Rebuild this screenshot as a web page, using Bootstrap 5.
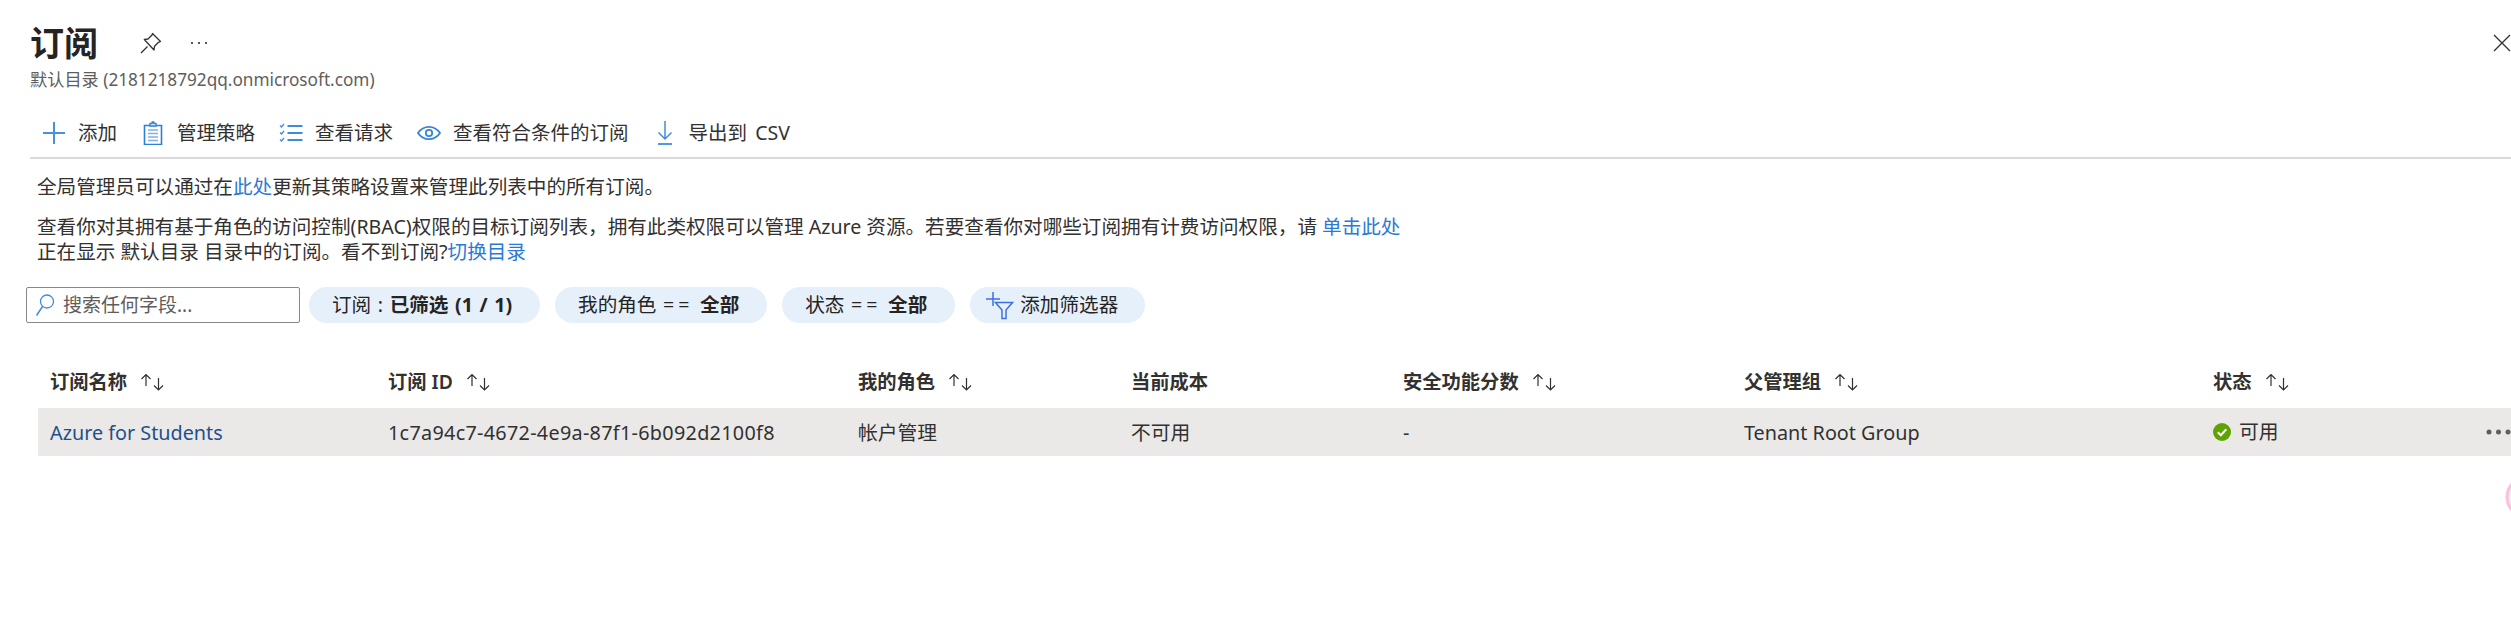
<!DOCTYPE html>
<html lang="zh-CN">
<head>
  <meta charset="UTF-8" />
  <meta name="viewport" content="width=device-width, initial-scale=1.0" />
  <title>订阅</title>
  <link href="https://cdn.jsdelivr.net/npm/bootstrap@5.3.2/dist/css/bootstrap.min.css" rel="stylesheet">
  <style>
    body {
      font-family: "Noto Sans", "Noto Sans CJK SC", sans-serif;
      font-size: 19.5px;
      color: #323130;
      background: #fff;
      overflow: hidden;
      height: 621px;
      position: relative;
    }
    a { color: #2b79d6; text-decoration: none; }
    .crumb-strip { height: 3px; overflow: hidden; padding-left: 50px; display: flex; align-items: flex-end; font-size: 19px; line-height: 24px; color: #2b79d6; }
    .title-row { height: 40px; margin-top: 20px; padding-left: 30px; }
    .page-title { font-size: 34px; font-weight: 700; line-height: 40px; margin: 0; color: #252423; width: 110px; }
    .title-more { margin-left: 28px; }
    .title-sub { padding-left: 30px; margin-top: 5px; font-size: 17.2px; line-height: 24px; color: #605e5c; }
    .tool-row { height: 51px; margin-top: 16px; margin-left: 30px; padding-left: 12px; gap: 24px; border-bottom: 2px solid #d9d9d9; }
    .tool-btn { font-size: 19.5px; word-spacing: 3px; color: #323130; gap: 12px; line-height: 24px; }
    .msg-area { padding-left: 37px; margin-top: 15px; line-height: 25px; font-size: 19.6px; }
    .msg-area p { margin: 0 0 15px; }
    .filter-row { margin-top: 23px; padding-left: 26px; height: 36px; }
    .search-box { width: 274px; height: 36px; border: 1px solid #8a8886; border-radius: 2px; padding-left: 8px; gap: 8px; }
    .search-input { border: 0; outline: 0; padding: 0; font-size: 19px; width: 220px; background: transparent; }
    .search-input::placeholder { color: #605e5c; opacity: 1; }
    .filter-pill { height: 36px; border-radius: 18px; background: #e5f0fb; font-size: 19.6px; word-spacing: 1.5px; padding: 0 28px 0 23px; color: #252423; line-height: 36px; white-space: nowrap; margin-left: 15px; }
    .search-box + .filter-pill { margin-left: 9px; }
    .filter-pill b { font-weight: 700; }
    .eq-op { letter-spacing: 4px; }
    .pill-add { padding: 0 27px 0 16px; gap: 6px; }
    .sub-table { table-layout: fixed; width: 2473px; margin: 33px 0 0 38px; border-collapse: collapse; }
    .sub-table th { height: 52px; padding: 0 12px; font-weight: 600; font-size: 19.3px; vertical-align: middle; white-space: nowrap; color: #323130; }
    .sub-table td { height: 48px; padding: 1px 12px 0; background: #ebe9e8; vertical-align: middle; white-space: nowrap; font-size: 19.8px; color: #323130; }
    .sub-table col:nth-child(1) { width: 338px; }
    .sub-table col:nth-child(2) { width: 470px; }
    .sub-table col:nth-child(3) { width: 273px; }
    .sub-table col:nth-child(4) { width: 272px; }
    .sub-table col:nth-child(5) { width: 341px; }
    .sub-table col:nth-child(6) { width: 469px; }
    .sub-table col:nth-child(7) { width: 250px; }
    .sub-table col:nth-child(8) { width: 60px; }
    .sub-link { color: #1f4f8b; }
    .sub-id { letter-spacing: .3px; }
    .sort-mark { margin-left: 13px; vertical-align: -2px; }
    .sub-table td.more-cell { padding: 0; text-align: right; }
    .pink-blob { position: absolute; left: 2505px; top: 475px; width: 44px; height: 44px; border-radius: 50%; background: radial-gradient(closest-side, #fff 72%, #fbb9d8 90%, #fcd0e4 97%, rgba(255,255,255,0) 100%); }
  </style>
</head>
<body>
  <svg width="0" height="0" class="d-block">
    <symbol id="sortArrows" viewBox="0 0 25 18">
      <path d="M6 13V1.500M1.500 6L6 1.500 10.500 6M18.500 5V17M14 12.500l4.500 4.500 4.500-4.500" fill="none" stroke="#323130" stroke-width="1.200"/>
    </symbol>
  </svg>

  <div class="crumb-strip"><span>主页 &gt;</span></div>

  <!-- Title -->
  <div class="title-row d-flex align-items-center">
    <h1 class="page-title">订阅</h1>
    <svg width="22" height="22" viewBox="0 0 22 22">
      <path d="M1 21l6.500-6.500M12.500 1.500l8 8-2 .8-4 4 -.5 3.700L4.300 7.500l3.700-.5 4-4z" fill="none" stroke="#323130" stroke-width="1.300" stroke-linejoin="round"/>
    </svg>
    <svg width="18" height="4" viewBox="0 0 18 4" class="title-more">
      <circle cx="2" cy="2" r="1.100" fill="#323130"/><circle cx="9" cy="2" r="1.100" fill="#323130"/><circle cx="16" cy="2" r="1.100" fill="#323130"/>
    </svg>
    <svg width="18" height="18" viewBox="0 0 18 18" class="ms-auto me-n1 flex-shrink-0">
      <path d="M1 1l16 16M17 1L1 17" stroke="#323130" stroke-width="1.300"/>
    </svg>
  </div>
  <div class="title-sub">默认目录 (2181218792qq.onmicrosoft.com)</div>

  <!-- Toolbar -->
  <div class="tool-row d-flex align-items-center">
    <button class="btn tool-btn border-0 p-0 d-inline-flex align-items-center">
      <svg width="24" height="24" viewBox="0 0 24 24"><path d="M12 1v22M1 12h22" stroke="#4a90dc" stroke-width="2"/></svg>添加
    </button>
    <button class="btn tool-btn border-0 p-0 d-inline-flex align-items-center">
      <svg width="24" height="24" viewBox="0 0 24 24">
        <path d="M3.500 4.500h17v19h-17z" fill="none" stroke="#2f7fd8" stroke-width="1.600"/>
        <path d="M9 5V2.500h2.200V1h1.600v1.500H15V5z" fill="#fff" stroke="#2f7fd8" stroke-width="1.300"/>
        <path d="M7 9h10M7 12.500h10M7 16h10M7 19.500h10" stroke="#7fb0e6" stroke-width="1.300"/>
      </svg>管理策略
    </button>
    <button class="btn tool-btn border-0 p-0 d-inline-flex align-items-center">
      <svg width="24" height="24" viewBox="0 0 24 24">
        <path d="M8.500 5h15M8.500 12h15M8.500 19h15" stroke="#3d8ade" stroke-width="2"/>
        <path d="M1 4.500l1.500 1.500L5 3M1 11.500L2.500 13 5 10M1 18.500L2.500 20 5 17" fill="none" stroke="#3d8ade" stroke-width="1.300"/>
      </svg>查看请求
    </button>
    <button class="btn tool-btn border-0 p-0 d-inline-flex align-items-center">
      <svg width="24" height="24" viewBox="0 0 24 24">
        <path d="M1 12c3-4.500 6.500-6.200 11-6.200s8 1.700 11 6.200c-3 4.500-6.500 6.200-11 6.200S4 16.500 1 12z" fill="none" stroke="#3584dc" stroke-width="1.800"/>
        <circle cx="12" cy="12" r="3.200" fill="none" stroke="#3584dc" stroke-width="1.800"/>
      </svg>查看符合条件的订阅
    </button>
    <button class="btn tool-btn border-0 p-0 d-inline-flex align-items-center">
      <svg width="24" height="24" viewBox="0 0 24 24">
        <path d="M12 0v18M5.500 11.500L12 18l6.500-6.500" fill="none" stroke="#3f8ddf" stroke-width="1.500"/>
        <path d="M5 23h14" stroke="#3f8ddf" stroke-width="1.800"/>
      </svg>导出到 CSV
    </button>
  </div>

  <!-- Messages -->
  <div class="msg-area">
    <p>全局管理员可以通过在<a href="#">此处</a>更新其策略设置来管理此列表中的所有订阅。</p>
    <p>查看你对其拥有基于角色的访问控制(RBAC)权限的目标订阅列表，拥有此类权限可以管理 Azure 资源。若要查看你对哪些订阅拥有计费访问权限，请 <a href="#">单击此处</a><br>正在显示 默认目录 目录中的订阅。看不到订阅?<a href="#">切换目录</a></p>
  </div>

  <!-- Filters -->
  <div class="filter-row d-flex align-items-center">
    <div class="search-box d-flex align-items-center">
      <svg width="20" height="24" viewBox="0 0 20 24" class="flex-shrink-0">
        <circle cx="12" cy="8.500" r="6.500" fill="none" stroke="#3f8ddf" stroke-width="1.300"/>
        <path d="M7.500 13.500L1.500 22.500" stroke="#3f8ddf" stroke-width="1.500"/>
      </svg>
      <input class="search-input" type="text" placeholder="搜索任何字段...">
    </div>
    <div class="filter-pill">订阅 : <b>已筛选 (1 / 1)</b></div>
    <div class="filter-pill">我的角色 <span class="eq-op">==</span> <b>全部</b></div>
    <div class="filter-pill">状态 <span class="eq-op">==</span> <b>全部</b></div>
    <div class="filter-pill pill-add d-flex align-items-center">
      <svg width="28" height="34" viewBox="0 0 28 34" class="flex-shrink-0">
        <path d="M7 4v14M0 11h14" stroke="#3c70e0" stroke-width="1.500"/>
        <path d="M9.500 14.500h17l-6.500 7.500v8.500h-4V22z" fill="none" stroke="#3c70e0" stroke-width="1.500"/>
      </svg>添加筛选器
    </div>
  </div>

  <!-- Subscriptions -->
  <table class="sub-table">
    <colgroup>
      <col><col><col><col><col><col><col><col>
    </colgroup>
    <thead>
      <tr>
        <th>订阅名称<svg class="sort-mark" width="25" height="18"><use href="#sortArrows"/></svg></th>
        <th>订阅 ID<svg class="sort-mark" width="25" height="18"><use href="#sortArrows"/></svg></th>
        <th>我的角色<svg class="sort-mark" width="25" height="18"><use href="#sortArrows"/></svg></th>
        <th>当前成本</th>
        <th>安全功能分数<svg class="sort-mark" width="25" height="18"><use href="#sortArrows"/></svg></th>
        <th>父管理组<svg class="sort-mark" width="25" height="18"><use href="#sortArrows"/></svg></th>
        <th>状态<svg class="sort-mark" width="25" height="18"><use href="#sortArrows"/></svg></th>
        <th></th>
      </tr>
    </thead>
    <tbody>
      <tr>
        <td><a href="#" class="sub-link">Azure for Students</a></td>
        <td class="sub-id">1c7a94c7-4672-4e9a-87f1-6b092d2100f8</td>
        <td>帐户管理</td>
        <td>不可用</td>
        <td>-</td>
        <td>Tenant Root Group</td>
        <td>
          <span class="d-inline-flex align-items-center gap-2">
            <svg width="18" height="18" viewBox="0 0 18 18">
              <circle cx="9" cy="9" r="9" fill="#5ea400"/>
              <path d="M4.800 9.300l3 3 5.500-6" fill="none" stroke="#fff" stroke-width="2"/>
            </svg>可用
          </span>
        </td>
        <td class="more-cell">
          <svg width="25" height="6" viewBox="0 0 25 6" class="d-block ms-auto">
            <circle cx="3" cy="3" r="2.500" fill="#605e5c"/><circle cx="12.500" cy="3" r="2.500" fill="#605e5c"/><circle cx="22" cy="3" r="2.500" fill="#605e5c"/>
          </svg>
        </td>
      </tr>
    </tbody>
  </table>

  <div class="pink-blob"></div>
</body>
</html>
